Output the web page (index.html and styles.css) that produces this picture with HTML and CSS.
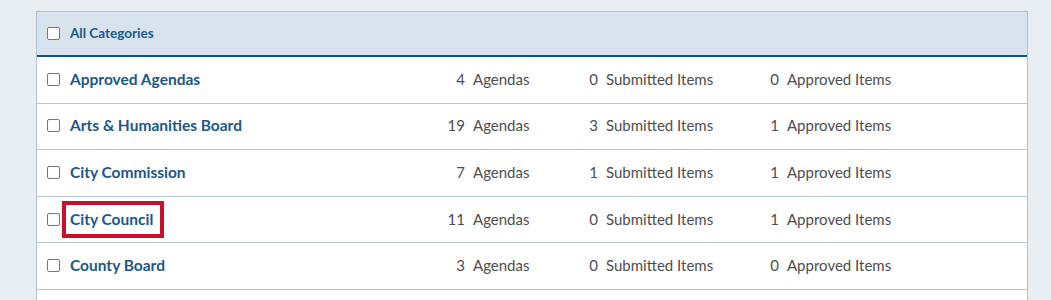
FILE: index.html
```html
<!DOCTYPE html>
<html lang="en">
<head>
<meta charset="utf-8">
<title>Categories</title>
<link rel="stylesheet" href="styles.css">
</head>
<body>
<div class="panel">
  <div class="head">
    <span class="box"></span>
    <span class="head-label">All Categories</span>
  </div>
  <div class="row">
    <span class="box"></span>
    <a class="name">Approved Agendas</a>
    <div class="stat"><span class="num">4</span><span>Agendas</span></div>
    <div class="stat"><span class="num">0</span><span>Submitted Items</span></div>
    <div class="stat"><span class="num">0</span><span>Approved Items</span></div>
  </div>
  <div class="row">
    <span class="box"></span>
    <a class="name">Arts &amp; Humanities Board</a>
    <div class="stat"><span class="num">19</span><span>Agendas</span></div>
    <div class="stat"><span class="num">3</span><span>Submitted Items</span></div>
    <div class="stat"><span class="num">1</span><span>Approved Items</span></div>
  </div>
  <div class="row">
    <span class="box"></span>
    <a class="name">City Commission</a>
    <div class="stat"><span class="num">7</span><span>Agendas</span></div>
    <div class="stat"><span class="num">1</span><span>Submitted Items</span></div>
    <div class="stat"><span class="num">1</span><span>Approved Items</span></div>
  </div>
  <div class="row">
    <span class="box"></span>
    <a class="name"><span class="hl">City Council</span></a>
    <div class="stat"><span class="num">11</span><span>Agendas</span></div>
    <div class="stat"><span class="num">0</span><span>Submitted Items</span></div>
    <div class="stat"><span class="num">1</span><span>Approved Items</span></div>
  </div>
  <div class="row">
    <span class="box"></span>
    <a class="name">County Board</a>
    <div class="stat"><span class="num">3</span><span>Agendas</span></div>
    <div class="stat"><span class="num">0</span><span>Submitted Items</span></div>
    <div class="stat"><span class="num">0</span><span>Approved Items</span></div>
  </div>
  <div class="row"></div>
</div>
</body>
</html>
```
FILE: styles.css
```css
html, body {
  margin: 0;
  padding: 0;
  background: #e8edf2;
  font-family: Lato, "Open Sans", sans-serif;
  overflow: hidden;
}
.panel {
  margin: 11px 0 0 36px;
  width: 992px;
  box-sizing: border-box;
  border: 1px solid #b3c1d0;
  border-bottom: none;
  background: #fff;
}
.head {
  box-sizing: border-box;
  display: flex;
  align-items: center;
  padding-left: 10px;
  padding-bottom: 1px;
  background: #d9e3ee;
  border-bottom: 2px solid #0e5384;
  height: 45px;
}
.head .box {
  margin-top: 1px;
}
.head-label {
  margin-left: 10px;
  font-size: 13.5px;
  font-weight: 700;
  color: #1a578a;
}
.box {
  display: block;
  width: 13px;
  height: 13px;
  box-sizing: border-box;
  border: 1px solid #777;
  border-radius: 2px;
  background: #fff;
}
.row {
  height: 46.6px;
  box-sizing: border-box;
  border-bottom: 1px solid #b7c6d5;
  display: grid;
  grid-template-columns: 23px 365px 133px 181px 1fr;
  align-items: center;
  padding-left: 10px;
  padding-bottom: 2px;
  font-size: 15px;
  color: #4d4d4d;
}
.row .box {
  margin-top: 1px;
}
.name {
  font-size: 15.5px;
  font-weight: 700;
  color: #1a578a;
}
.hl {
  position: relative;
}
.hl::after {
  content: "";
  position: absolute;
  left: -8px;
  right: -11px;
  top: -9px;
  bottom: -10px;
  border: 4px solid #c8102e;
}
.stat {
  display: flex;
  gap: 8px;
}
.num {
  width: 30px;
  text-align: right;
}
```
